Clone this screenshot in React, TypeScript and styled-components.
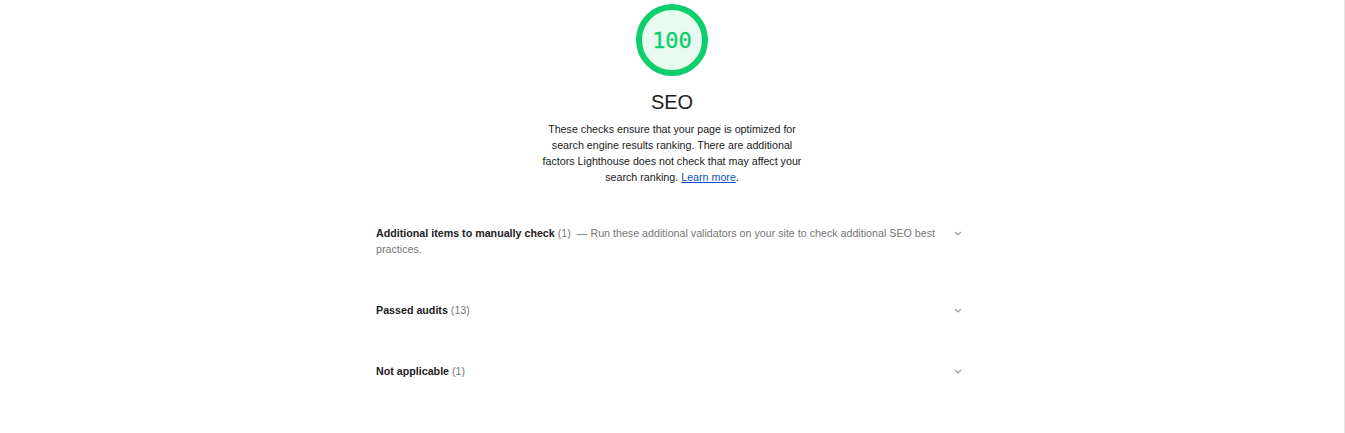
import styled, { createGlobalStyle } from "styled-components";

const GlobalStyle = createGlobalStyle`
	html, body {
		margin: 0;
		padding: 0;
		background: #ffffff;
		font-family: "Liberation Sans", Arial, sans-serif;
		color: #212121;
	}
`;

const Frame = styled.div`
	display: flex;
	height: 433px;
	overflow: hidden;
`;

const Main = styled.main`
	flex: 1;
	border-right: 1px solid #e6e6e6;
	display: flex;
	flex-direction: column;
	align-items: center;
`;

const Header = styled.header`
	display: flex;
	flex-direction: column;
	align-items: center;
	padding-top: 4px;
`;

const Gauge = styled.div`
	width: 72px;
	height: 72px;
	box-sizing: border-box;
	border-radius: 50%;
	border: 6px solid #0cce6b;
	background: #e7faef;
	display: flex;
	align-items: center;
	justify-content: center;
	span {
		font-family: "DejaVu Sans Mono", monospace;
		font-size: 22px;
		color: #0cce6b;
		line-height: 1;
		margin-top: 1px;
		-webkit-text-stroke: 0.3px #0cce6b;
	}
`;

const Title = styled.h2`
	margin: 12px 0 0;
	font-size: 20px;
	font-weight: normal;
	line-height: 28px;
	color: #212121;
`;

const Description = styled.p`
	margin: 5px 0 0;
	width: 275px;
	text-align: center;
	font-size: 10.7px;
	line-height: 16px;
	color: #212121;
	a {
		color: #0c50c7;
		text-decoration: underline;
	}
`;

const Groups = styled.div`
	width: 590px;
	margin-top: 18px;
	margin-left: -2px;
`;

const Row = styled.div`
	display: flex;
	align-items: flex-start;
	padding: 22px 0 23px;
`;

const RowText = styled.div`
	flex: 1;
	max-width: 566px;
	font-size: 10.7px;
	line-height: 16px;
	color: #757575;
	b {
		font-weight: bold;
		color: #212121;
	}
`;

const Chevron = styled.svg`
	margin-left: auto;
	margin-right: 4px;
	margin-top: 6px;
	width: 8px;
	height: 5px;
`;

function Arrow() {
	return (
		<Chevron viewBox="0 0 8 5">
			<path d="M1 1l3 3 3-3" fill="none" stroke="#9e9e9e" strokeWidth="1.2" />
		</Chevron>
	);
}

function Group(props: { title: string; count: number; text?: string }) {
	const label = `(${props.count})`;
	return (
		<Row>
			<RowText>
				<b>{props.title}</b> {label}
				{props.text && <>{"\u00a0 — "}{props.text}</>}
			</RowText>
			<Arrow />
		</Row>
	);
}

export default function App() {
	return (
		<Frame>
			<GlobalStyle />
			<Main>
				<Header>
					<Gauge>
						<span>100</span>
					</Gauge>
					<Title>SEO</Title>
					<Description>
						These checks ensure that your page is optimized for search
						engine results ranking. There are additional factors
						Lighthouse does not check that may affect your search
						ranking. <a href="#">Learn more</a>.
					</Description>
				</Header>
				<Groups>
					<Group
						title="Additional items to manually check"
						count={1}
						text="Run these additional validators on your site to check additional SEO best practices."
					/>
					<Group title="Passed audits" count={13} />
					<Group title="Not applicable" count={1} />
				</Groups>
			</Main>
		</Frame>
	);
}
